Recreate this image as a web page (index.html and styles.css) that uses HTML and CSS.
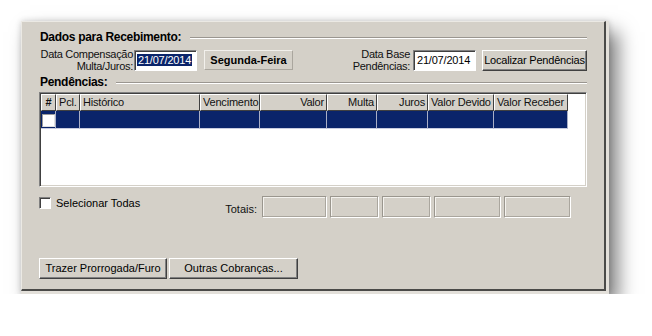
FILE: index.html
```html
<!DOCTYPE html>
<html lang="pt-BR">
<head>
    <meta charset="UTF-8">
    <title>Dados para Recebimento</title>
    <link rel="stylesheet" href="styles.css">
</head>
<body>

    <div class="frame">
        <div class="panel">

            <!-- Dados para Recebimento -->
            <div class="group-title"><span>Dados para Recebimento:</span></div>

            <div class="data-row">
                <div class="field-label label-comp">Data Compensação<br>Multa/Juros:</div>
                <div class="text-box date-first"><span class="selected">21/07/2014</span></div>
                <div class="day-box">Segunda-Feira</div>

                <div class="data-right">
                    <div class="field-label">Data Base<br>Pendências:</div>
                    <div class="text-box">21/07/2014</div>
                    <div class="button btn-localizar">Localizar Pendências</div>
                </div>
            </div>

            <!-- Pendencias -->
            <div class="group-title title-pend"><span>Pendências:</span></div>

            <div class="grid">
                <div class="grid-head">
                    <div class="hcell hash">#</div>
                    <div class="hcell">Pcl.</div>
                    <div class="hcell">Histórico</div>
                    <div class="hcell">Vencimento</div>
                    <div class="hcell num">Valor</div>
                    <div class="hcell num">Multa</div>
                    <div class="hcell num">Juros</div>
                    <div class="hcell">Valor Devido</div>
                    <div class="hcell">Valor Receber</div>
                </div>
                <div class="grid-row">
                    <div class="cell"><span class="row-check"></span></div>
                    <div class="cell"></div>
                    <div class="cell"></div>
                    <div class="cell"></div>
                    <div class="cell"></div>
                    <div class="cell"></div>
                    <div class="cell"></div>
                    <div class="cell"></div>
                    <div class="cell"></div>
                </div>
            </div>

            <!-- Totais -->
            <div class="totals-row">
                <label class="check-all"><span class="check"></span>Selecionar Todas</label>
                <div class="totals">
                    <span class="totals-label">Totais:</span>
                    <div class="total-box w-valor"></div>
                    <div class="total-box w-multa"></div>
                    <div class="total-box w-juros"></div>
                    <div class="total-box w-devido"></div>
                    <div class="total-box w-receber"></div>
                </div>
            </div>

            <!-- Botoes -->
            <div class="actions">
                <div class="button btn-trazer">Trazer Prorrogada/Furo</div>
                <div class="button btn-outras">Outras Cobranças...</div>
            </div>

        </div>
    </div>

</body>
</html>
```

FILE: styles.css
```css
body {
    margin: 0;
    background-color: #ffffff;
    font-family: "Liberation Sans", Arial, sans-serif;
    font-size: 11px;
    color: #000000;
    overflow: hidden;
}

/* Window frame with photo shadow */
.frame {
    width: 588px;
    margin: 21px 0 0 21px;
    padding: 0 3px 3px 0;
    box-sizing: border-box;
    background-color: #e3e0da;
    box-shadow: 9px 11px 18px rgba(0, 0, 0, 0.5), 0 0 6px rgba(0, 0, 0, 0.18);
}

.panel {
    background-color: #d4d0c8;
    border-top: 1px solid #ebe9e4;
    border-left: 1px solid #ebe9e4;
    border-right: 2px solid #4a4a48;
    border-bottom: 2px solid #4a4a48;
    padding: 9px 17px 10px 17px;
}

/* Group titles with etched line */
.group-title {
    display: flex;
    align-items: center;
    height: 13px;
    line-height: 13px;
    font-weight: bold;
    font-size: 12px;
    letter-spacing: -0.3px;
    padding-left: 1px;
    white-space: nowrap;
}

.group-title::after {
    content: "";
    flex: 1;
    margin-left: 9px;
    border-top: 1px solid #9a9690;
    border-bottom: 1px solid #ffffff;
}

.title-pend {
    margin-top: 4px;
}

/* First data row */
.data-row {
    display: flex;
    align-items: center;
    height: 24px;
    margin-top: 4px;
    white-space: nowrap;
}

.field-label {
    text-align: right;
    line-height: 12px;
    letter-spacing: -0.3px;
    color: #111111;
}

.label-comp {
    width: 94px;
    margin-right: 1px;
}

.text-box {
    width: 63px;
    height: 21px;
    box-sizing: border-box;
    background-color: #ffffff;
    border: 1px solid;
    border-color: #808080 #ffffff #ffffff #808080;
    box-shadow: inset 1px 1px 0 #404040;
    padding: 3px 0 0 3px;
    line-height: 13px;
    letter-spacing: -0.2px;
}

.date-first {
    padding-left: 2px;
}

.selected {
    background-color: #0a246a;
    color: #ffffff;
    padding: 0 1px;
}

.day-box {
    width: 89px;
    height: 20px;
    box-sizing: border-box;
    margin-left: 7px;
    border: 1px solid;
    border-color: #f2f0ec #aaa69e #aaa69e #f2f0ec;
    font-weight: bold;
    text-align: center;
    line-height: 18px;
}

.data-right {
    display: flex;
    align-items: center;
    margin-left: auto;
}

.data-right .field-label {
    margin-right: 3px;
}

.button {
    height: 21px;
    box-sizing: border-box;
    background-color: #d4d0c8;
    border: 1px solid;
    border-color: #ffffff #404040 #404040 #ffffff;
    box-shadow: inset -1px -1px 0 #808080;
    text-align: center;
    line-height: 18px;
    white-space: nowrap;
}

.btn-localizar {
    width: 105px;
    margin-left: 6px;
    letter-spacing: -0.2px;
}

/* Grid */
.grid {
    height: 95px;
    margin-top: 3px;
    box-sizing: border-box;
    background-color: #ffffff;
    border: 1px solid;
    border-color: #808080 #ffffff #ffffff #808080;
    box-shadow: inset 1px 1px 0 #404040, inset -1px -1px 0 #d4d0c8;
    padding: 1px 0 0 1px;
}

.grid-head,
.grid-row {
    display: grid;
    grid-template-columns: 15px 24px 120px 60px 67px 50px 51px 66px 74px;
}

.hcell {
    height: 17px;
    box-sizing: border-box;
    background-color: #d4d0c8;
    border-top: 1px solid #ffffff;
    border-left: 1px solid #ffffff;
    border-right: 1px solid #404040;
    border-bottom: 1px solid #404040;
    padding: 0 2px;
    line-height: 15px;
    letter-spacing: -0.2px;
    white-space: nowrap;
    overflow: hidden;
    color: #111111;
}

.hash {
    font-weight: bold;
    text-align: center;
    padding: 0;
}

.num {
    text-align: right;
}

.cell {
    height: 18px;
    box-sizing: border-box;
    background-color: #0a246a;
    border-right: 1px solid #a9afc6;
    border-bottom: 1px solid #c8cce0;
}

.row-check {
    display: block;
    width: 13px;
    height: 13px;
    box-sizing: border-box;
    margin: 3px 0 0 1px;
    background-color: #ffffff;
    border: 1px solid;
    border-color: #9a9a9a #e0e0e0 #e0e0e0 #9a9a9a;
}

/* Totals row */
.totals-row {
    display: flex;
    justify-content: space-between;
    align-items: flex-start;
    margin-top: 9px;
    padding-right: 16px;
}

.check-all {
    display: flex;
    align-items: center;
    margin-top: 1px;
    line-height: 12px;
}

.check {
    width: 12px;
    height: 12px;
    box-sizing: border-box;
    margin-right: 5px;
    background-color: #ffffff;
    border: 1px solid;
    border-color: #808080 #ffffff #ffffff #808080;
    box-shadow: inset 1px 1px 0 #404040;
}

.totals {
    display: flex;
    align-items: center;
    gap: 3px;
}

.totals-label {
    margin-right: 2px;
    padding-top: 3px;
    color: #111111;
}

.total-box {
    height: 22px;
    box-sizing: border-box;
    border: 1px solid;
    border-color: #9a968e #ffffff #ffffff #9a968e;
    box-shadow: inset -1px -1px 0 #aaa69e, inset 1px 1px 0 #f4f2ee;
}

.w-valor { width: 65px; }
.w-multa { width: 49px; }
.w-juros { width: 49px; }
.w-devido { width: 67px; }
.w-receber { width: 67px; }

/* Bottom buttons */
.actions {
    display: flex;
    gap: 2px;
    margin-top: 40px;
}

.btn-trazer {
    width: 128px;
}

.btn-outras {
    width: 129px;
}
```
